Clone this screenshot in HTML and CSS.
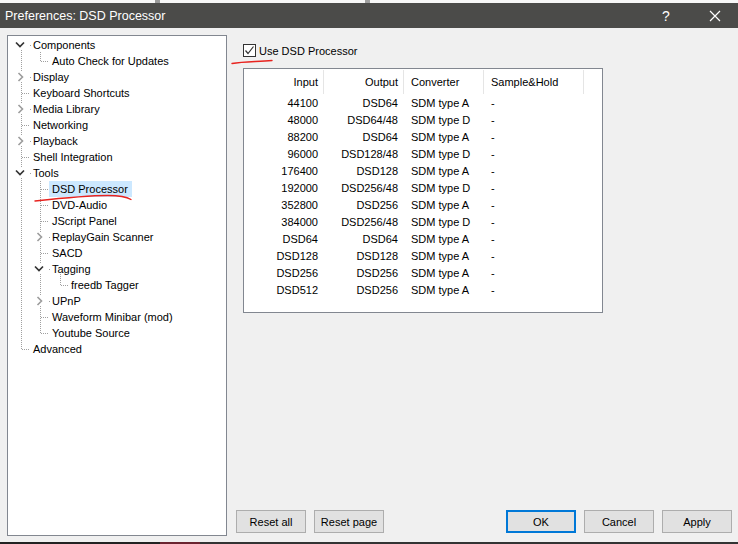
FILE: index.html
```html
<!DOCTYPE html>
<html>
<head>
<meta charset="utf-8">
<link rel="stylesheet" href="styles.css">
</head>
<body>
<div class="screen">
  <div class="topstrip"></div>
  <div class="titlebar">
    <span class="title">Preferences: DSD Processor</span>
    <span class="help">?</span>
    <svg class="close" width="12" height="12" viewBox="0 0 12 12"><path d="M1 1 L11 11 M11 1 L1 11" stroke="#fff" stroke-width="1.2" fill="none"/></svg>
  </div>
  <div class="dlg">
    <div class="tree">
      <svg class="lines" width="217" height="330" viewBox="0 0 217 330">
        <g stroke="#a0a0a0" stroke-width="1" stroke-dasharray="1 1" shape-rendering="crispEdges" fill="none">
          <path d="M13.5 14 V36 M13.5 46 V68 M13.5 78 V100 M13.5 110 V132 M13.5 142 V313"/>
          <path d="M14 57.5 H22 M14 89.5 H22 M14 121.5 H22 M14 313.5 H22"/>
          <path d="M32.5 16 V25 M32.5 145 V196 M32.5 206 V228 M32.5 238 V260 M32.5 270 V297"/>
          <path d="M33 25.5 H41 M33 153.5 H41 M33 169.5 H41 M33 185.5 H41 M33 217.5 H41 M33 281.5 H41 M33 297.5 H41"/>
          <path d="M52.5 238 V249 M53 249.5 H60"/>
          <path d="M22 9.5 H23 M22 41.5 H23 M22 73.5 H23 M22 105.5 H23 M22 137.5 H23 M41 201.5 H42 M41 233.5 H42 M41 265.5 H42"/>
        </g>
      </svg>
      <div class="row lv0"><span class="exp"><svg width="16" height="16"><path d="M4 5.5 L8 9.5 L12 5.5" class="open"/></svg></span><span class="lbl">Components</span></div>
      <div class="row lv1"><span class="exp"></span><span class="lbl">Auto Check for Updates</span></div>
      <div class="row lv0"><span class="exp"><svg width="16" height="16"><path d="M6.5 4 L10.5 8 L6.5 12" class="shut"/></svg></span><span class="lbl">Display</span></div>
      <div class="row lv0"><span class="exp"></span><span class="lbl">Keyboard Shortcuts</span></div>
      <div class="row lv0"><span class="exp"><svg width="16" height="16"><path d="M6.5 4 L10.5 8 L6.5 12" class="shut"/></svg></span><span class="lbl">Media Library</span></div>
      <div class="row lv0"><span class="exp"></span><span class="lbl">Networking</span></div>
      <div class="row lv0"><span class="exp"><svg width="16" height="16"><path d="M6.5 4 L10.5 8 L6.5 12" class="shut"/></svg></span><span class="lbl">Playback</span></div>
      <div class="row lv0"><span class="exp"></span><span class="lbl">Shell Integration</span></div>
      <div class="row lv0"><span class="exp"><svg width="16" height="16"><path d="M4 5.5 L8 9.5 L12 5.5" class="open"/></svg></span><span class="lbl">Tools</span></div>
      <div class="row lv1"><span class="exp"></span><span class="lbl sel">DSD Processor</span></div>
      <div class="row lv1"><span class="exp"></span><span class="lbl">DVD-Audio</span></div>
      <div class="row lv1"><span class="exp"></span><span class="lbl">JScript Panel</span></div>
      <div class="row lv1"><span class="exp"><svg width="16" height="16"><path d="M6.5 4 L10.5 8 L6.5 12" class="shut"/></svg></span><span class="lbl">ReplayGain Scanner</span></div>
      <div class="row lv1"><span class="exp"></span><span class="lbl">SACD</span></div>
      <div class="row lv1"><span class="exp"><svg width="16" height="16"><path d="M4 5.5 L8 9.5 L12 5.5" class="open"/></svg></span><span class="lbl">Tagging</span></div>
      <div class="row lv2"><span class="exp"></span><span class="lbl">freedb Tagger</span></div>
      <div class="row lv1"><span class="exp"><svg width="16" height="16"><path d="M6.5 4 L10.5 8 L6.5 12" class="shut"/></svg></span><span class="lbl">UPnP</span></div>
      <div class="row lv1"><span class="exp"></span><span class="lbl">Waveform Minibar (mod)</span></div>
      <div class="row lv1"><span class="exp"></span><span class="lbl">Youtube Source</span></div>
      <div class="row lv0"><span class="exp"></span><span class="lbl">Advanced</span></div>
    </div>
    <div class="side">
      <div class="page">
        <label class="chk">
          <span class="box"><svg width="11" height="11" viewBox="0 0 11 11"><path d="M1.5 5.5 L4 8.5 L9.5 1.5" stroke="#333" stroke-width="1.2" fill="none"/></svg></span>
          <span>Use DSD Processor</span>
        </label>
        <div class="list">
          <div class="lrow head">
            <div class="c1">Input</div><div class="c2">Output</div><div class="c3">Converter</div><div class="c4">Sample&amp;Hold</div>
          </div>
          <div class="lrow"><div class="c1">44100</div><div class="c2">DSD64</div><div class="c3">SDM type A</div><div class="c4">-</div></div>
          <div class="lrow"><div class="c1">48000</div><div class="c2">DSD64/48</div><div class="c3">SDM type D</div><div class="c4">-</div></div>
          <div class="lrow"><div class="c1">88200</div><div class="c2">DSD64</div><div class="c3">SDM type A</div><div class="c4">-</div></div>
          <div class="lrow"><div class="c1">96000</div><div class="c2">DSD128/48</div><div class="c3">SDM type D</div><div class="c4">-</div></div>
          <div class="lrow"><div class="c1">176400</div><div class="c2">DSD128</div><div class="c3">SDM type A</div><div class="c4">-</div></div>
          <div class="lrow"><div class="c1">192000</div><div class="c2">DSD256/48</div><div class="c3">SDM type D</div><div class="c4">-</div></div>
          <div class="lrow"><div class="c1">352800</div><div class="c2">DSD256</div><div class="c3">SDM type A</div><div class="c4">-</div></div>
          <div class="lrow"><div class="c1">384000</div><div class="c2">DSD256/48</div><div class="c3">SDM type D</div><div class="c4">-</div></div>
          <div class="lrow"><div class="c1">DSD64</div><div class="c2">DSD64</div><div class="c3">SDM type A</div><div class="c4">-</div></div>
          <div class="lrow"><div class="c1">DSD128</div><div class="c2">DSD128</div><div class="c3">SDM type A</div><div class="c4">-</div></div>
          <div class="lrow"><div class="c1">DSD256</div><div class="c2">DSD256</div><div class="c3">SDM type A</div><div class="c4">-</div></div>
          <div class="lrow"><div class="c1">DSD512</div><div class="c2">DSD256</div><div class="c3">SDM type A</div><div class="c4">-</div></div>
        </div>
      </div>
      <div class="buttons">
        <button class="btn">Reset all</button>
        <button class="btn">Reset page</button>
        <span class="spacer"></span>
        <button class="btn def">OK</button>
        <button class="btn">Cancel</button>
        <button class="btn">Apply</button>
      </div>
    </div>
  </div>
  <div class="bottomstrip"></div>
  <svg class="ink" width="738" height="544" viewBox="0 0 738 544">
    <g stroke="#e8231f" stroke-width="1.4" fill="none" stroke-linecap="round">
      <path d="M232 63.5 C244 61.5 257 61.8 272 60.5"/>
      <path d="M35 201 C58 198.5 86 195.5 108 195.5 C119 195.5 126 196.5 131 199.5"/>
    </g>
  </svg>
</div>
</body>
</html>
```
FILE: styles.css
```css
* { box-sizing: border-box; }
html, body { margin: 0; padding: 0; }
body {
  width: 738px;
  height: 544px;
  overflow: hidden;
  font-family: "Liberation Sans", Arial, sans-serif;
  font-size: 11px;
  color: #000;
  background: #f0f0f0;
}
.screen {
  position: relative;
  width: 738px;
  height: 544px;
  display: flex;
  flex-direction: column;
}
.topstrip {
  height: 3px;
  background: linear-gradient(90deg, #f7f7f7 0 155px, #9a9a9a 155px 160px, #f7f7f7 160px 365px, #a0a0a0 365px 370px, #f7f7f7 370px 780px);
}
.titlebar {
  height: 25px;
  background: #4b4b49;
  color: #fff;
  display: flex;
  align-items: center;
  padding-left: 5px;
}
.title {
  font-size: 12.5px;
  flex: 1;
}
.help {
  font-size: 14px;
  width: 14px;
  text-align: center;
  margin-right: 36px;
}
.close { margin-right: 17px; }
.dlg {
  height: 514px;
  padding: 7px 6px 6px 7px;
  display: flex;
  gap: 9px;
  background: #f0f0f0;
}
.tree {
  position: relative;
  width: 220px;
  height: 501px;
  background: #fff;
  border: 1px solid #828790;
  padding-top: 1px;
}
.lines {
  position: absolute;
  left: 0;
  top: 0;
}
.row {
  position: relative;
  height: 16px;
  display: flex;
  align-items: center;
  white-space: nowrap;
}
.lv0 { padding-left: 4px; }
.lv1 { padding-left: 23px; }
.lv2 { padding-left: 42px; }
.exp {
  width: 16px;
  height: 16px;
  margin-right: 2px;
  display: block;
}
.exp svg { display: block; }
.open { stroke: #333; stroke-width: 1.7; fill: none; }
.shut { stroke: #9c9c9c; stroke-width: 1.6; fill: none; }
.lbl {
  height: 16px;
  line-height: 16px;
  padding: 0 4px 0 3px;
}
.sel { background: #cce8ff; }
.side {
  flex: 1;
  display: flex;
  flex-direction: column;
  padding-bottom: 3px;
}
.page {
  padding-left: 7px;
  padding-top: 9px;
}
.chk {
  display: flex;
  align-items: center;
  height: 13px;
  gap: 3px;
}
.box {
  width: 13px;
  height: 13px;
  border: 1px solid #333;
  background: #fff;
  display: block;
}
.box svg { display: block; }
.list {
  margin-top: 11px;
  width: 360px;
  height: 245px;
  background: #fff;
  border: 1px solid #828790;
}
.lrow {
  display: flex;
  height: 17px;
  line-height: 17px;
  white-space: nowrap;
}
.lrow.head {
  height: 26px;
  line-height: 26px;
}
.c1, .c2 { width: 80px; text-align: right; padding-right: 6px; }
.c3 { width: 80px; padding-left: 7px; }
.c4 { width: 100px; padding-left: 7px; }
.head > div {
  border-right: 1px solid #e5e5e5;
  margin: 1px 0 1px;
  line-height: 25px;
}
.head .c1, .head .c2 { padding-right: 5px; }
.buttons {
  margin-top: auto;
  display: flex;
  gap: 8px;
  height: 23px;
}
.spacer { flex: 1; }
.btn {
  width: 70px;
  height: 23px;
  background: #e1e1e1;
  border: 1px solid #adadad;
  font-family: "Liberation Sans", Arial, sans-serif;
  font-size: 11px;
  color: #000;
  padding: 0;
}
.btn.def {
  border: 1px solid #0078d7;
  box-shadow: inset 0 0 0 1px #0078d7;
}
.bottomstrip {
  height: 2px;
  background: linear-gradient(90deg, #222 0 160px, #6b2430 160px 200px, #333 200px 780px);
}
.ink {
  position: absolute;
  left: 0;
  top: 0;
  pointer-events: none;
}
```
